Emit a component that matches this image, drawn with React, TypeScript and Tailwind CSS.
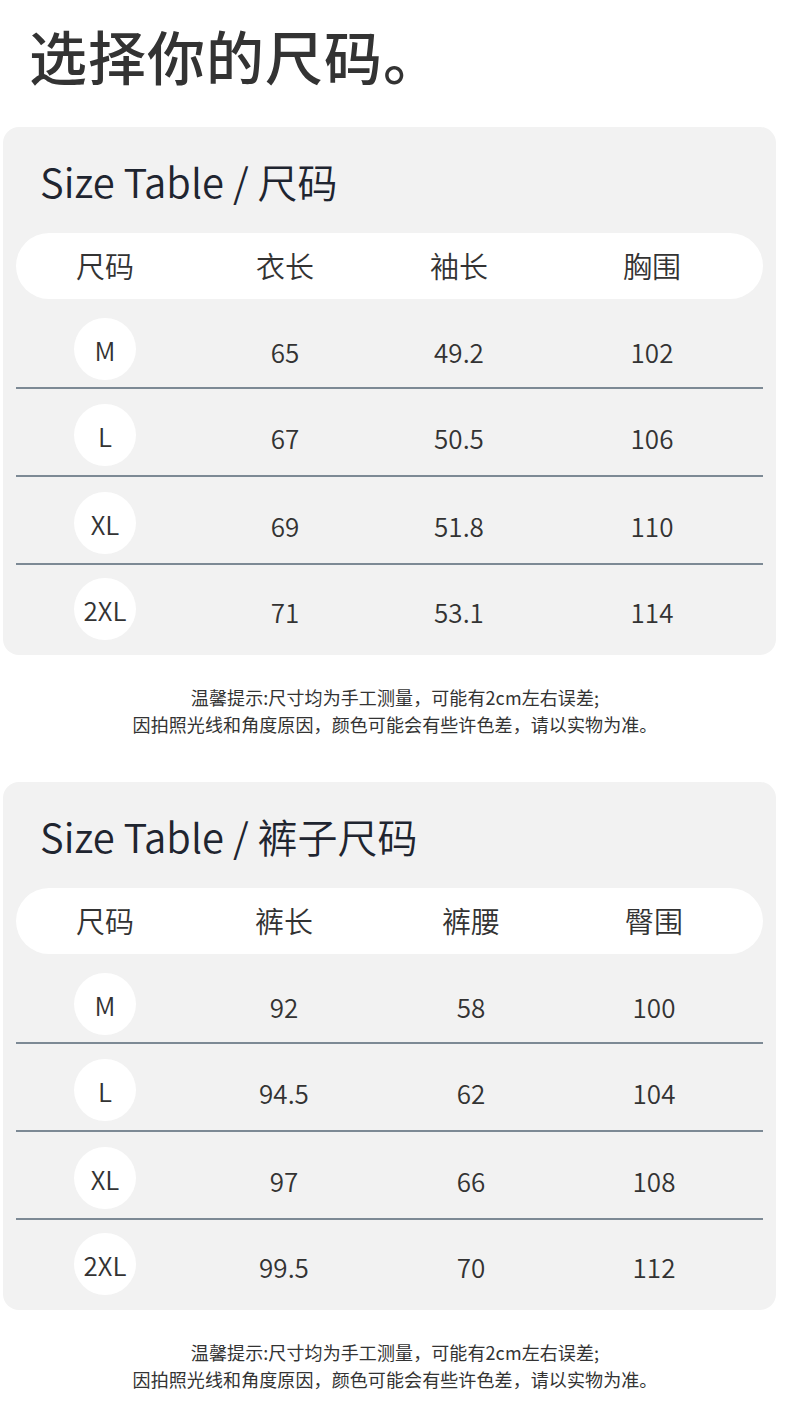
const FONT = { fontFamily: '"Noto Sans CJK SC", "Noto Sans", sans-serif' };

type Table = {
  title: string;
  cols: string;
  heads: string[];
  rows: { size: string; vals: string[] }[];
};

const TOP: Table = {
  title: 'Size Table / 尺码',
  cols: 'grid-cols-[178px_182px_166px_220px]',
  heads: ['尺码', '衣长', '袖长', '胸围'],
  rows: [
    { size: 'M', vals: ['65', '49.2', '102'] },
    { size: 'L', vals: ['67', '50.5', '106'] },
    { size: 'XL', vals: ['69', '51.8', '110'] },
    { size: '2XL', vals: ['71', '53.1', '114'] },
  ],
};

const PANTS: Table = {
  title: 'Size Table / 裤子尺码',
  cols: 'grid-cols-[178px_180px_194px_172px]',
  heads: ['尺码', '裤长', '裤腰', '臀围'],
  rows: [
    { size: 'M', vals: ['92', '58', '100'] },
    { size: 'L', vals: ['94.5', '62', '104'] },
    { size: 'XL', vals: ['97', '66', '108'] },
    { size: '2XL', vals: ['99.5', '70', '112'] },
  ],
};

function SizeCard({ table }: { table: Table }) {
  const last = table.rows.length - 1;
  return (
    <div className="ml-[3px] w-[773px] rounded-2xl bg-[#f2f2f2] pt-[26px]">
      <h2 className="pl-[37px] text-[40px] font-[350] leading-[56px] text-[#1f2530]">{table.title}</h2>
      <div className="mx-[13px] mt-[24px]">
        <div className={`grid h-[66px] items-center rounded-full bg-white ${table.cols}`}>
          {table.heads.map((h) => (
            <div key={h} className="text-center text-[29px] font-[350] text-[#333]">
              {h}
            </div>
          ))}
        </div>
        {table.rows.map((r, i) => (
          <div key={r.size}>
            <div
              className={`grid items-center ${table.cols} ${i === 0 ? 'pt-[19px]' : i === last ? 'pt-[13px]' : 'pt-[15px]'} ${
                i === 0 ? 'pb-[7px]' : i === last ? 'pb-[15px]' : 'pb-[9px]'
              }`}
            >
              <div className="flex justify-center">
                <div className="flex h-[62px] w-[62px] items-center justify-center rounded-full bg-white text-[26px] font-[350] text-[#333]">
                  {r.size}
                </div>
              </div>
              {r.vals.map((v, j) => (
                <div key={j} className="pt-[4px] text-center text-[26px] font-[350] text-[#333]">
                  {v}
                </div>
              ))}
            </div>
            {i < last ? <div className="h-[2px] bg-[#7d8a95]" /> : null}
          </div>
        ))}
      </div>
    </div>
  );
}

function Note() {
  return (
    <div className="pt-[29px] pb-[44px] text-center text-[18px] leading-[27px] tracking-[0.1px] text-[#333]">
      <p>温馨提示:尺寸均为手工测量，可能有2cm左右误差;</p>
      <p>因拍照光线和角度原因，颜色可能会有些许色差，请以实物为准。</p>
    </div>
  );
}

export default function App() {
  return (
    <div className="h-[1417px] w-[790px] overflow-hidden bg-white" style={FONT}>
      <div className="h-[127px] pl-[29px] pt-[26px]">
        <h1 className="text-[58px] font-medium leading-[58px] tracking-[1px] text-[#333]">选择你的尺码。</h1>
      </div>
      <SizeCard table={TOP} />
      <Note />
      <SizeCard table={PANTS} />
      <Note />
    </div>
  );
}
